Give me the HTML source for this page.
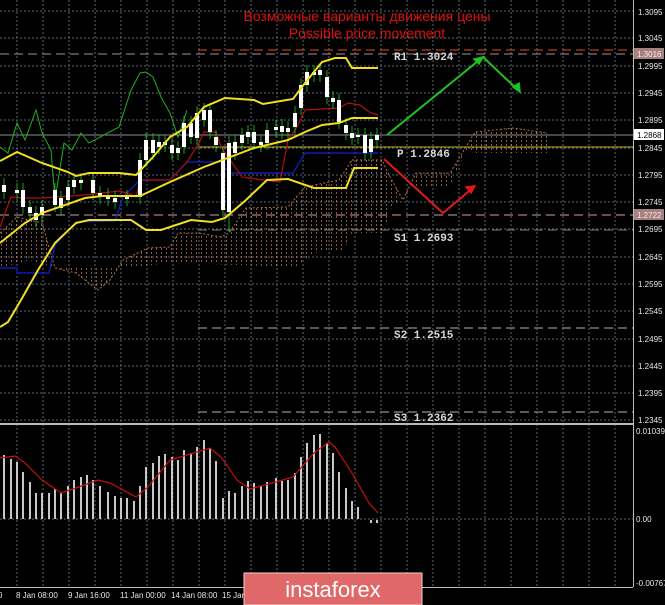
<!DOCTYPE html>
<html><head><meta charset="utf-8"><style>
html,body{margin:0;padding:0;background:#000;}
svg{display:block}
text{font-family:"Liberation Sans",sans-serif;}
text.mono{font-family:"Liberation Mono",monospace;font-weight:bold;}
</style></head><body>
<svg width="665" height="605" viewBox="0 0 665 605" xmlns="http://www.w3.org/2000/svg">
<defs>
<pattern id="hatch" width="5" height="4" patternUnits="userSpaceOnUse">
<rect x="1" y="0" width="1" height="2" fill="#c8875a"/>
</pattern>
</defs>
<rect width="665" height="605" fill="#000"/>
<g stroke="#5c6674" stroke-width="1" stroke-dasharray="2,2">
<path d="M17 0V587M43 0V587M69 0V587M95 0V587M121 0V587M147 0V587M173 0V587M199 0V587M225 0V587M251 0V587M277 0V587M303 0V587M329 0V587M355 0V587M381 0V587M407 0V587M433 0V587M459 0V587M485 0V587M511 0V587M537 0V587M563 0V587M589 0V587M615 0V587"/>
<path d="M0 11H633M0 38H633M0 66H633M0 93H633M0 120H633M0 148H633M0 175H633M0 202H633M0 229H633M0 257H633M0 284H633M0 311H633M0 339H633M0 366H633M0 393H633M0 420H633M0 519H633"/>
</g>
<path d="M0 233L17 217L42 223L55 268L76 273L98 290L110 280L123 260L148 248L170 247L178 233L199 233L221 237L229 233L246 208L288 207L305 187L339 180L352 160L382 160L390 177L403 200L416 173L450 173L458 160L475 132L513 128L547 133L547 153L475 153L466 150L450 187L411 187L390 210L384 233L352 233L344 250L314 253L297 267L174 263L120 268L55 268L30 260L0 268Z" fill="url(#hatch)" opacity="0.7"/>
<path d="M0 233L17 217L42 223L55 268L76 273L98 290L110 280L123 260L148 248L170 247L178 233L199 233L221 237L229 233L246 208L288 207L305 187L339 180L352 160L382 160L390 177L403 200L416 173L450 173L458 160L475 132L513 128L547 133" fill="none" stroke="#b07040" stroke-dasharray="2,2"/>
<path d="M0 54H633" stroke="#b08a8a" stroke-dasharray="9,5"/>
<path d="M198 50H633" stroke="#e05020" stroke-dasharray="9,5"/>
<path d="M0 135H633" stroke="#8a8e94"/>
<path d="M198 147H633" stroke="#c8b020"/>
<path d="M0 215H633" stroke="#8a6a6a" stroke-width="1.5" stroke-dasharray="9,5"/>
<path d="M198 230H633" stroke="#777" stroke-dasharray="9,5"/>
<path d="M198 328H633" stroke="#857070" stroke-width="1.5" stroke-dasharray="9,5"/>
<path d="M198 412H633" stroke="#857070" stroke-width="1.5" stroke-dasharray="9,5"/>
<g fill="#d8d8d8" font-size="11">
<text class="mono" x="394" y="60">R1 1.3024</text>
<text class="mono" x="397" y="157">P 1.2846</text>
<text class="mono" x="394" y="241">S1 1.2693</text>
<text class="mono" x="394" y="338">S2 1.2515</text>
<text class="mono" x="394" y="421">S3 1.2362</text>
</g>
<polyline fill="none" stroke="#1fb01f" stroke-width="1" points="0,147 8,153 17,123 25,140 36,110 42,133 51,150 55,200 64,143 72,150 81,133 89,143 119,127 131,90 140,73 146,72 153,77 161,97 170,113 178,137 187,110"/>
<polyline fill="none" stroke="#1020d0" stroke-width="1.2" points="0,268 17,268 17,273 49,273 55,245 76,222 115,221 123,197 140,180 170,180 187,162 221,162 229,173 293,173 305,153 378,153"/>
<polyline fill="none" stroke="#b01010" stroke-width="1.2" points="0,227 11,197 25,198 42,198 85,195 119,191 127,193 136,197 140,180 170,180 187,162 199,143 204,132 216,132 221,147 242,177 263,180 280,182 288,140 297,127 305,110 339,108 348,103 360,105 369,112 378,115"/>
<g stroke="#18d018" stroke-width="0.8" fill="none">
<path d="M4 178V199M17 183V200M23 183V214M30 200V220M36 206V227M42 200V222M55 183V212M61 191V215M68 180V207M74 173V194M81 173V190M93 173V200M100 186V204M108 188V206M115 191V209M127 190V206M140 153V204M146 133V167M153 133V160M159 135V154M165 135V152M172 138V160M178 141V160M184 116V154M191 116V144M197 106V145M204 103V127M210 103V139M216 130V152M223 146V217M229 136V232M235 135V160M242 128V150M248 125V144M254 125V150M261 135V152M267 123V150M276 120V137M282 119V139M288 121V139M295 106V134M301 78V115M307 65V92M314 65V82M320 63V82M327 70V104M333 91V109M339 93V129M346 118V140M352 126V145M358 128V144M365 128V160M371 132V159M377 128V147"/>
</g>
<g fill="#fff">
<rect x="2" y="185" width="4" height="7"/><rect x="15" y="190" width="4" height="3"/><rect x="21" y="190" width="4" height="17"/><rect x="28" y="207" width="4" height="6"/><rect x="34" y="213" width="4" height="7"/><rect x="40" y="207" width="4" height="8"/><rect x="53" y="190" width="4" height="15"/><rect x="59" y="198" width="4" height="10"/><rect x="66" y="187" width="4" height="13"/><rect x="72" y="180" width="4" height="7"/><rect x="79" y="180" width="4" height="3"/><rect x="91" y="180" width="4" height="13"/><rect x="98" y="193" width="4" height="4"/><rect x="106" y="195" width="4" height="4"/><rect x="113" y="198" width="4" height="4"/><rect x="125" y="197" width="4" height="2"/><rect x="138" y="160" width="4" height="37"/><rect x="144" y="140" width="4" height="20"/><rect x="151" y="140" width="4" height="13"/><rect x="157" y="142" width="4" height="5"/><rect x="163" y="142" width="4" height="3"/><rect x="170" y="145" width="4" height="8"/><rect x="176" y="148" width="4" height="5"/><rect x="182" y="123" width="4" height="24"/><rect x="189" y="123" width="4" height="14"/><rect x="195" y="113" width="4" height="25"/><rect x="202" y="110" width="4" height="10"/><rect x="208" y="110" width="4" height="22"/><rect x="214" y="137" width="4" height="8"/><rect x="221" y="153" width="4" height="57"/><rect x="227" y="143" width="4" height="69"/><rect x="233" y="142" width="4" height="11"/><rect x="240" y="135" width="4" height="8"/><rect x="246" y="132" width="4" height="5"/><rect x="252" y="132" width="4" height="11"/><rect x="259" y="142" width="4" height="3"/><rect x="265" y="130" width="4" height="13"/><rect x="274" y="127" width="4" height="3"/><rect x="280" y="126" width="4" height="6"/><rect x="286" y="128" width="4" height="4"/><rect x="293" y="113" width="4" height="14"/><rect x="299" y="85" width="4" height="23"/><rect x="305" y="72" width="4" height="13"/><rect x="312" y="72" width="4" height="3"/><rect x="318" y="70" width="4" height="5"/><rect x="325" y="77" width="4" height="20"/><rect x="331" y="98" width="4" height="4"/><rect x="337" y="100" width="4" height="22"/><rect x="344" y="125" width="4" height="8"/><rect x="350" y="133" width="4" height="5"/><rect x="356" y="135" width="4" height="2"/><rect x="363" y="135" width="4" height="18"/><rect x="369" y="139" width="4" height="13"/><rect x="375" y="135" width="4" height="5"/>
</g>
<g fill="none" stroke="#f0e020" stroke-width="2">
<polyline points="0,161 17,152 42,163 68,172 76,176 89,173 119,173 136,175 153,157 170,137 187,127 204,107 225,98 254,100 263,104 293,99 305,83 322,62 335,58 346,58 352,68 378,68"/>
<polyline points="0,243 25,223 42,213 85,198 102,196 140,196 170,182 204,167 225,159 254,148 288,140 305,132 322,125 339,123 352,118 378,118"/>
<polyline points="0,327 8,322 21,300 38,270 55,243 76,223 89,220 131,220 146,230 161,230 191,220 212,222 225,218 246,200 267,180 288,179 314,188 346,188 354,168 378,168"/>
</g>
<g fill="none" stroke-width="2">
<polyline stroke="#20c020" points="387,135 483,57 520,92"/>
<polyline stroke="#e01818" points="384,159 443,213 475,186"/>
</g>
<path d="M483 57l-9 2 5 5z M520 92l-1-9-6 4z" fill="#20c020" stroke="#20c020" stroke-width="1.5"/>
<path d="M475 186l-9 1 5 6z" fill="#e01818" stroke="#e01818" stroke-width="1.5"/>
<g fill="#e01010" font-size="14" text-anchor="middle">
<text x="367" y="21">Возможные варианты движения цены</text>
<text x="367" y="38">Possible price movement</text>
</g>
<path d="M0 424H633" stroke="#bbb" stroke-width="2"/>
<path d="M633.5 0V587M0 587.5H633" stroke="#bbb"/>
<g stroke="#c8c8c8" stroke-width="2">
<path d="M4 519V455M11 519V459M17 519V462M23 519V472M30 519V482M36 519V493M42 519V493M49 519V493M55 519V489M61 519V493M68 519V486M74 519V480M81 519V477M87 519V475M93 519V480M100 519V486M108 519V492M115 519V496M121 519V498M127 519V498M134 519V501M140 519V486M146 519V467M153 519V463M159 519V456M165 519V454M172 519V457M178 519V460M184 519V450M191 519V453M197 519V447M204 519V440M210 519V448M216 519V461M223 519V498M229 519V491M235 519V493M242 519V486M248 519V481M254 519V483M261 519V486M267 519V482M276 519V478M282 519V481M288 519V480M295 519V473M301 519V457M307 519V443M314 519V435M320 519V434M327 519V443M333 519V453M339 519V472M346 519V488M352 519V501M358 519V507M371 520V523M377 520V523"/>
</g>
<polyline fill="none" stroke="#c01010" stroke-width="1.2" points="0,458 15,456 25,463 42,480 61,493 76,488 98,480 110,483 136,497 148,487 170,460 187,455 210,448 221,457 237,480 250,489 276,482 293,477 314,453 329,442 335,447 352,473 369,503 378,513"/>
<g fill="#e8e8e8" font-size="8">
<text x="638" y="15">1.3095</text><text x="638" y="41">1.3045</text><text x="638" y="69">1.2995</text><text x="638" y="96">1.2945</text><text x="638" y="123">1.2895</text><text x="638" y="151">1.2845</text><text x="638" y="178">1.2795</text><text x="638" y="205">1.2745</text><text x="638" y="232">1.2695</text><text x="638" y="260">1.2645</text><text x="638" y="287">1.2595</text><text x="638" y="314">1.2545</text><text x="638" y="342">1.2495</text><text x="638" y="369">1.2445</text><text x="638" y="396">1.2395</text><text x="638" y="423">1.2345</text>
<text x="636" y="434">0.01039</text><text x="636" y="522">0.00</text><text x="636" y="586">-0.00767</text>
</g>
<rect x="634" y="48" width="30" height="11" fill="#a88080"/>
<text x="637" y="57" font-size="8" fill="#eee">1.3016</text>
<rect x="634" y="129" width="30" height="11" fill="#fff"/>
<text x="637" y="138" font-size="8" fill="#000">1.2868</text>
<rect x="634" y="209" width="30" height="11" fill="#a88080"/>
<text x="637" y="218" font-size="8" fill="#eee">1.2722</text>
<g fill="#e8e8e8" font-size="8">
<text x="-2" y="598">0</text><text x="16" y="598">8 Jan 08:00</text><text x="68" y="598">9 Jan 16:00</text><text x="120" y="598">11 Jan 00:00</text><text x="171" y="598">14 Jan 08:00</text><text x="222" y="598">15 Jan</text>
</g>
<rect x="244" y="573" width="178" height="32" fill="#e06868" stroke="#f4d0d0" stroke-width="1"/>
<text x="333" y="597" font-size="22" fill="#fff" text-anchor="middle">instaforex</text>
</svg>
</body></html>
